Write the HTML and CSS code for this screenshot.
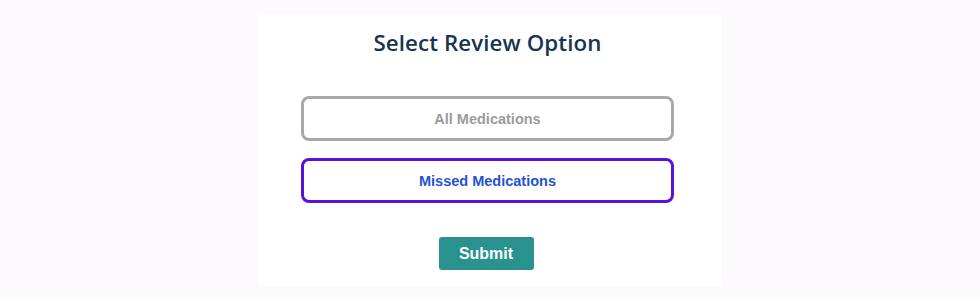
FILE: index.html
```html
<!DOCTYPE html>
<html>
<head>
<meta charset="utf-8">
<link rel="stylesheet" href="styles.css">
</head>
<body>
<div class="card">
  <h2 class="title">Select Review Option</h2>
  <div class="options">
    <button class="option option-muted">All Medications</button>
    <button class="option option-active">Missed Medications</button>
  </div>
  <button class="submit">Submit</button>
</div>
</body>
</html>
```
FILE: styles.css
```css
html, body {
  margin: 0;
  padding: 0;
  background: #fcfafd;
}
body {
  padding-top: 15px;
  font-family: "Liberation Sans", Arial, sans-serif;
}
.card {
  width: 462px;
  height: 272px;
  margin: 0 auto;
  background: #ffffff;
  box-sizing: border-box;
  display: flex;
  flex-direction: column;
  align-items: center;
}
.title {
  margin: 14px 5px 0 0;
  font-family: "Open Sans", "Noto Sans", sans-serif;
  font-weight: 600;
  font-size: 22.3px;
  line-height: 28px;
  color: #163550;
  letter-spacing: 0.1px;
}
.options {
  margin-top: 39px;
  display: flex;
  flex-direction: column;
  gap: 17px;
  margin-right: 5px;
}
.option {
  width: 373px;
  height: 45px;
  box-sizing: border-box;
  background: #fff;
  border-radius: 8px;
  font-family: "Liberation Sans", Arial, sans-serif;
  font-weight: bold;
  font-size: 14.5px;
  padding: 0;
  cursor: pointer;
}
.option-muted {
  border: 3px solid #a9a9a9;
  color: #9c9c9c;
}
.option-active {
  border: 3px solid #5a12d4;
  color: #2352d6;
}
.submit {
  margin-top: 34px;
  margin-right: 8px;
  width: 95px;
  height: 33px;
  border: none;
  border-radius: 3px;
  background: #2a928e;
  color: #ffffff;
  font-family: "Liberation Sans", Arial, sans-serif;
  font-weight: bold;
  font-size: 16px;
  padding: 0;
}
```
